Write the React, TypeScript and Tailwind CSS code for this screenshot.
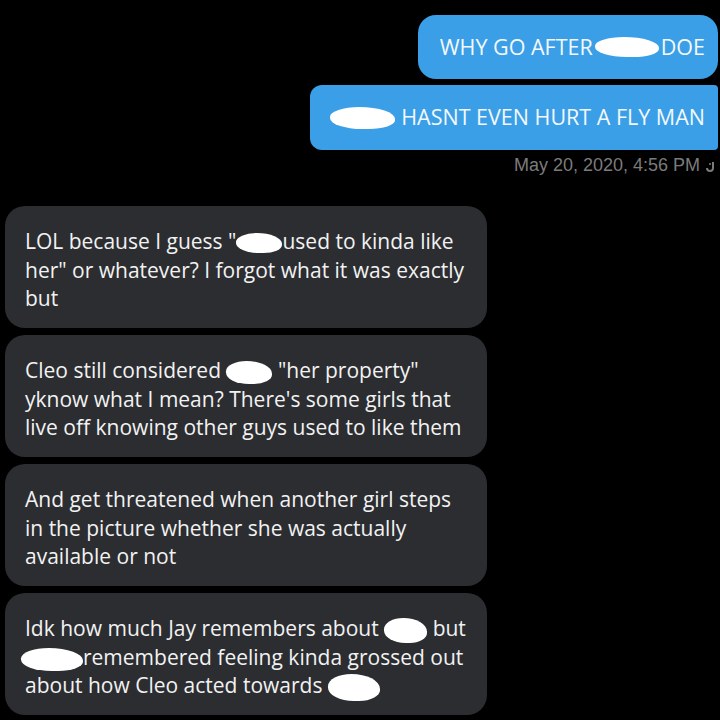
const Blob = ({ w, h, className = "" }: { w: string; h: string; className?: string }) => (
    <span
        className={`inline-block bg-white align-middle rounded-[45%_55%_40%_50%] ${w} ${h} ${className}`}
    />
);

function SentBubble({ children, className }: { children: React.ReactNode; className: string }) {
    return (
        <div
            className={`flex items-center bg-[#3a9fe6] text-[#f4f8fc] text-[21.5px] whitespace-nowrap ${className}`}
        >
            {children}
        </div>
    );
}

function ReceivedBubble({ children }: { children: React.ReactNode }) {
    return (
        <div className="w-[482px] h-[122px] rounded-[20px] bg-[#2b2d31] pl-[20px] pt-[21px] text-[21px] leading-[28.5px] text-[#f2f2f2] whitespace-nowrap">
            {children}
        </div>
    );
}

export default function App() {
    return (
        <div
            className="w-[720px] h-[720px] bg-black overflow-hidden flex flex-col"
            style={{ fontFamily: '"Open Sans", "Noto Sans", sans-serif' }}
        >
            <div className="flex flex-col items-end pt-[15px] pr-[2px] gap-[6px]">
                <SentBubble className="h-[64px] rounded-[18px] pl-[22px] pr-[13px]">
                    WHY GO AFTER
                    <Blob w="w-[64px]" h="h-[20px]" className="mx-[2px]" />
                    DOE
                </SentBubble>
                <SentBubble className="h-[65px] rounded-l-[12px] rounded-r-[4px] pl-[20px] pr-[13px]">
                    <Blob w="w-[65px]" h="h-[22px]" className="mr-[6px]" />
                    HASNT EVEN HURT A FLY MAN
                </SentBubble>
            </div>

            <div
                className="self-end flex items-center gap-[6px] pr-[4px] mt-[2px] text-[18px] text-[#7b7b7b]"
                style={{ fontFamily: '"Liberation Sans", Arial, sans-serif' }}
            >
                <span>May 20, 2020, 4:56 PM</span>
                <svg width="10" height="14" viewBox="0 0 10 14" className="mt-[2px]">
                    <path d="M7 2 V8 Q7 11 4 11 Q1 11 1 8" stroke="#7b7b7b" strokeWidth="2" fill="none" />
                    <circle cx="4" cy="4" r="1" fill="#7b7b7b" />
                </svg>
            </div>

            <div className="flex flex-col gap-[7px] pl-[5px] mt-[27px]">
                <ReceivedBubble>
                    LOL because I guess "
                    <Blob w="w-[46px]" h="h-[20px]" />
                    used to kinda like
                    <br />
                    her" or whatever? I forgot what it was exactly
                    <br />
                    but
                </ReceivedBubble>
                <ReceivedBubble>
                    Cleo still considered{" "}
                    <Blob w="w-[46px]" h="h-[23px]" /> "her property"
                    <br />
                    yknow what I mean? There's some girls that
                    <br />
                    live off knowing other guys used to like them
                </ReceivedBubble>
                <ReceivedBubble>
                    And get threatened when another girl steps
                    <br />
                    in the picture whether she was actually
                    <br />
                    available or not
                </ReceivedBubble>
                <ReceivedBubble>
                    Idk how much Jay remembers about{" "}
                    <Blob w="w-[43px]" h="h-[25px]" /> but
                    <br />
                    <Blob w="w-[62px]" h="h-[23px]" className="-ml-[4px]" />
                    remembered feeling kinda grossed out
                    <br />
                    about how Cleo acted towards{" "}
                    <Blob w="w-[52px]" h="h-[27px]" />
                </ReceivedBubble>
            </div>
        </div>
    );
}
